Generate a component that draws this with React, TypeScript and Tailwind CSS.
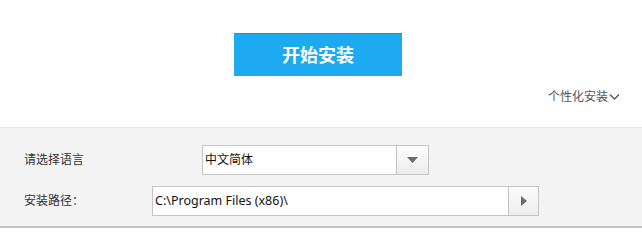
import React from 'react';

const font = { fontFamily: '"Noto Sans", "Noto Sans CJK SC", sans-serif' };

const App: React.FC = () => {
  return (
    <div className="w-[642px] h-[228px] bg-white overflow-hidden text-[12px]" style={font}>
      {/* top area */}
      <div className="h-[127px] flex flex-col">
        <div className="pt-[33px] pl-[234px]">
          <button className="w-[168px] h-[43px] bg-[#1eaaf1] border-t border-[#1790d6] text-white text-[18px] font-bold flex items-center justify-center">
            开始安装
          </button>
        </div>
        <div className="flex justify-end pr-[22px] mt-[13px]">
          <span className="flex items-center text-[#555] text-[12px] leading-[16px]">
            个性化安装
            <svg width="11" height="8" viewBox="0 0 11 8" className="ml-[1px]">
              <path d="M1 1.5 L5.5 6 L10 1.5" fill="none" stroke="#555" strokeWidth="1.3" />
            </svg>
          </span>
        </div>
      </div>

      {/* options panel */}
      <div className="h-[101px] bg-[#f4f4f4] border-t border-[#e6e6e6] border-b-2 border-b-[#c2c2c2] flex flex-col">
        <div className="flex items-center mt-[17px] h-[30px]">
          <span className="pl-[24px] w-[202px] text-[#333]">请选择语言</span>
          <div className="w-[227px] h-[30px] bg-white border border-[#c4c4c4] flex">
            <span className="flex-1 pl-[2px] flex items-center text-[#111]">中文简体</span>
            <div className="w-[32px] border-l border-[#c4c4c4] bg-gradient-to-b from-[#fcfcfc] to-[#ededed] flex items-center justify-center">
              <svg width="11" height="6" viewBox="0 0 11 6">
                <path d="M0 0 H11 L5.5 6 Z" fill="#6b6b6b" />
              </svg>
            </div>
          </div>
        </div>
        <div className="flex items-center mt-[11px] h-[30px]">
          <span className="pl-[24px] w-[152px] text-[#333]">安装路径：</span>
          <div className="w-[387px] h-[30px] bg-white border border-[#c4c4c4] flex">
            <span className="flex-1 pl-[2px] flex items-center text-[#111] text-[12.5px]">C:\Program Files (x86)\</span>
            <div className="w-[30px] border-l border-[#c4c4c4] bg-gradient-to-b from-[#fcfcfc] to-[#ededed] flex items-center justify-center">
              <svg width="6" height="10" viewBox="0 0 6 10">
                <path d="M0 0 L6 5 L0 10 Z" fill="#6b6b6b" />
              </svg>
            </div>
          </div>
        </div>
      </div>
    </div>
  );
};

export default App;
